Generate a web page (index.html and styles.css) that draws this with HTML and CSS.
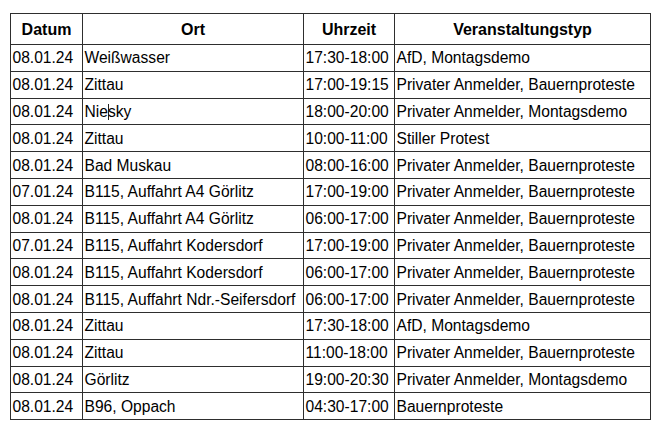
FILE: index.html
```html
<!DOCTYPE html>
<html lang="de">
<head>
<meta charset="utf-8">
<title>Veranstaltungen</title>
<link rel="stylesheet" href="styles.css">
</head>
<body>
<div class="page">
<table class="events">
<colgroup>
<col class="c-date"><col class="c-place"><col class="c-time"><col class="c-type">
</colgroup>
<thead>
<tr><th>Datum</th><th>Ort</th><th>Uhrzeit</th><th>Veranstaltungstyp</th></tr>
</thead>
<tbody>
<tr><td>08.01.24</td><td>Weißwasser</td><td>17:30-18:00</td><td>AfD, Montagsdemo</td></tr>
<tr><td>08.01.24</td><td>Zittau</td><td>17:00-19:15</td><td>Privater Anmelder, Bauernproteste</td></tr>
<tr><td>08.01.24</td><td>Nie<span class="caret"></span>sky</td><td>18:00-20:00</td><td>Privater Anmelder, Montagsdemo</td></tr>
<tr><td>08.01.24</td><td>Zittau</td><td>10:00-11:00</td><td>Stiller Protest</td></tr>
<tr><td>08.01.24</td><td>Bad Muskau</td><td>08:00-16:00</td><td>Privater Anmelder, Bauernproteste</td></tr>
<tr><td>07.01.24</td><td>B115, Auffahrt A4 Görlitz</td><td>17:00-19:00</td><td>Privater Anmelder, Bauernproteste</td></tr>
<tr><td>08.01.24</td><td>B115, Auffahrt A4 Görlitz</td><td>06:00-17:00</td><td>Privater Anmelder, Bauernproteste</td></tr>
<tr><td>07.01.24</td><td>B115, Auffahrt Kodersdorf</td><td>17:00-19:00</td><td>Privater Anmelder, Bauernproteste</td></tr>
<tr><td>08.01.24</td><td>B115, Auffahrt Kodersdorf</td><td>06:00-17:00</td><td>Privater Anmelder, Bauernproteste</td></tr>
<tr><td>08.01.24</td><td>B115, Auffahrt Ndr.-Seifersdorf</td><td>06:00-17:00</td><td>Privater Anmelder, Bauernproteste</td></tr>
<tr><td>08.01.24</td><td>Zittau</td><td>17:30-18:00</td><td>AfD, Montagsdemo</td></tr>
<tr><td>08.01.24</td><td>Zittau</td><td>11:00-18:00</td><td>Privater Anmelder, Bauernproteste</td></tr>
<tr><td>08.01.24</td><td>Görlitz</td><td>19:00-20:30</td><td>Privater Anmelder, Montagsdemo</td></tr>
<tr><td>08.01.24</td><td>B96, Oppach</td><td>04:30-17:00</td><td>Bauernproteste</td></tr>
</tbody>
</table>
</div>
</body>
</html>
```
FILE: styles.css
```css
html, body {
  margin: 0;
  padding: 0;
  background: #ffffff;
}
.page {
  padding: 13px 0 0 10px;
}
.events {
  border-collapse: collapse;
  table-layout: fixed;
  width: 640px;
  font-family: "Liberation Sans", Arial, sans-serif;
  font-size: 15.6px;
  color: #000;
}
.c-date { width: 72px; }
.c-place { width: 221px; }
.c-time { width: 91px; }
.c-type { width: 256px; }
.events th,
.events td {
  border: 1px solid #2e2e2e;
  padding: 0 0 0 1.5px;
  white-space: nowrap;
  vertical-align: middle;
  line-height: 17px;
}
.events th {
  height: 30px;
  font-size: 16px;
  font-weight: bold;
  text-align: center;
  padding: 0;
}
.events td {
  height: 25.8px;
  text-align: left;
}
.caret {
  display: inline-block;
  width: 0;
  height: 16px;
  border-left: 1px solid #222;
  vertical-align: -3px;
  margin-right: -1px;
}
```
